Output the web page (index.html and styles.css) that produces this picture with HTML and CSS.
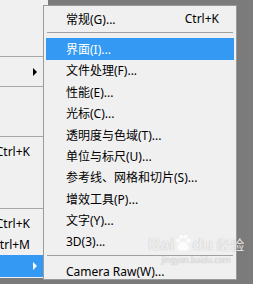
FILE: index.html
```html
<!DOCTYPE html>
<html>
<head>
<meta charset="utf-8">
<title>首选项菜单</title>
<link rel="stylesheet" href="styles.css">
</head>
<body>
  <div class="screen">
    <div class="parent">
      <div class="prow blank1"></div>
      <div class="psep"></div>
      <div class="prow"><span class="arrow"></span></div>
      <div class="psep"></div>
      <div class="prow blank2"></div>
      <div class="psep"></div>
      <div class="prow"><span class="pkey">Ctrl+K</span></div>
      <div class="prow blank3"></div>
      <div class="psep"></div>
      <div class="prow"><span class="pkey">Ctrl+K</span></div>
      <div class="prow"><span class="pkey">Ctrl+M</span></div>
      <div class="prow active"><span class="arrow white"></span></div>
    </div>

    <div class="sub">
      <div class="item"><span class="label">常规(G)...</span><span class="key">Ctrl+K</span></div>
      <div class="sep"></div>
      <div class="item active"><span class="label">界面(I)...</span></div>
      <div class="item"><span class="label">文件处理(F)...</span></div>
      <div class="item"><span class="label">性能(E)...</span></div>
      <div class="item"><span class="label">光标(C)...</span></div>
      <div class="item"><span class="label">透明度与色域(T)...</span></div>
      <div class="item"><span class="label">单位与标尺(U)...</span></div>
      <div class="item"><span class="label">参考线、网格和切片(S)...</span></div>
      <div class="item"><span class="label">增效工具(P)...</span></div>
      <div class="item"><span class="label">文字(Y)...</span></div>
      <div class="item"><span class="label">3D(3)...</span></div>
      <div class="sep"></div>
      <div class="item"><span class="label">Camera Raw(W)...</span></div>

      <div class="mark">
        <span class="mark-logo">Bai<svg class="paw" width="18" height="18" viewBox="0 0 22 22"><circle cx="5" cy="8" r="2.6"/><circle cx="9" cy="3.5" r="2.6"/><circle cx="14" cy="3.5" r="2.6"/><circle cx="18" cy="8" r="2.6"/><path d="M11 9c-4 0-7 5-7 8 0 3 3 3.5 7 3.5s7-.5 7-3.5c0-3-3-8-7-8z"/></svg>du<span class="mark-cn">经验</span></span>
        <span class="mark-url">jingyan.baidu.com</span>
      </div>
    </div>
  </div>
</body>
</html>
```

FILE: styles.css
```css
body {
  margin: 0;
  background: #7b7b7b;
  font-family: "Noto Sans", "Noto Sans CJK SC", sans-serif;
  font-size: 12px;
  color: #000;
}

.screen {
  display: flex;
  width: 253px;
  height: 284px;
  overflow: hidden;
}

/* parent menu, mostly covered by the submenu */
.parent {
  flex: none;
  width: 48px;
  height: 278px;
  background: #f0f0f0;
  display: flex;
  flex-direction: column;
}
.prow {
  height: 21px;
  display: flex;
  align-items: center;
  justify-content: flex-end;
  padding-right: 18px;
  flex: none;
}
.prow.blank1 { height: 52px; }
.prow.blank2 { height: 41px; }
.prow.blank3 { height: 42px; }
.prow.active { background: #3399f3; height: 22px; }
.psep {
  flex: none;
  height: 1px;
  background: #a7a7a7;
  margin: 4px 0;
}
.pkey {
  white-space: nowrap;
}
.arrow {
  width: 0;
  height: 0;
  border-left: 4px solid #000;
  border-top: 4px solid transparent;
  border-bottom: 4px solid transparent;
  margin-right: -7px;
}
.arrow.white { border-left-color: #fff; }

/* the open submenu */
.sub {
  position: relative;
  flex: none;
  box-sizing: border-box;
  width: 194px;
  height: 275px;
  margin-left: -5px;
  margin-top: 5px;
  padding: 2px;
  background: #f0f0f0;
  border: 1px solid #9a9a9a;
  display: flex;
  flex-direction: column;
}
.item {
  flex: none;
  height: 21.4px;
  display: flex;
  align-items: center;
  justify-content: space-between;
  padding: 0 15px 0 20px;
  white-space: nowrap;
}
.item.active {
  background: #3399f3;
  color: #fff;
}
.sep {
  flex: none;
  height: 1px;
  background: #a0a0a0;
  margin: 3px 1px 5px;
}

/* faint site watermark over the lower right */
.mark {
  position: absolute;
  left: 104px;
  top: 229px;
  display: flex;
  flex-direction: column;
  align-items: center;
  white-space: nowrap;
  color: rgba(255, 255, 255, 0.8);
  text-shadow: 0 0 1px rgba(120, 120, 120, 0.6);
  pointer-events: none;
}
.mark-logo {
  display: flex;
  align-items: flex-end;
  font-family: "Liberation Sans", "Noto Sans CJK SC", sans-serif;
  font-size: 17px;
  font-weight: bold;
  line-height: 20px;
  height: 20px;
}
.mark-cn {
  font-size: 14px;
  font-weight: normal;
  margin-left: 3px;
}
.paw {
  fill: rgba(255, 255, 255, 0.8);
  margin: 0 0 3px;
}
.mark-url {
  font-size: 8px;
  line-height: 9px;
  color: rgba(255, 255, 255, 0.6);
}
```
